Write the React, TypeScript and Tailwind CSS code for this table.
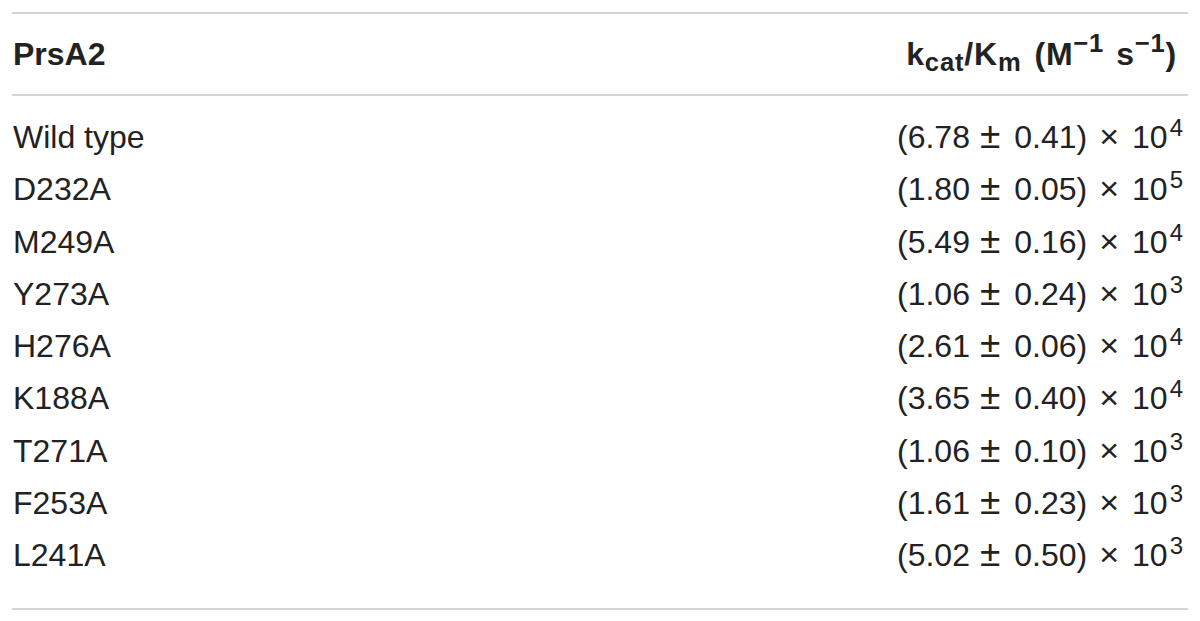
const rows: [string, string, string, string][] = [
  ["Wild type", "6.78", "0.41", "4"],
  ["D232A", "1.80", "0.05", "5"],
  ["M249A", "5.49", "0.16", "4"],
  ["Y273A", "1.06", "0.24", "3"],
  ["H276A", "2.61", "0.06", "4"],
  ["K188A", "3.65", "0.40", "4"],
  ["T271A", "1.06", "0.10", "3"],
  ["F253A", "1.61", "0.23", "3"],
  ["L241A", "5.02", "0.50", "3"],
];

export default function App() {
  return (
    <div className="w-[1200px] h-[621px] bg-white pt-[12px] px-3 text-[#222] font-['Liberation_Sans',Arial,sans-serif]">
      <div className="border-t-2 border-[#d4d4d4]">
        <div className="flex items-center justify-between h-[80px] px-[1px] pr-[11px] text-[32px] font-bold">
          <span>PrsA2</span>
          <span className="whitespace-nowrap tracking-[0.8px]">
            k<sub className="text-[0.8em]">cat</sub>/K<sub className="text-[0.8em]">m</sub>
            <span className="inline-block w-[13px]" />
            (M<sup className="text-[0.8em]">−1</sup>
            <span className="inline-block w-[12px]" />
            s<sup className="text-[0.8em]">−1</sup>)
          </span>
        </div>
        <div className="border-t-2 border-[#d4d4d4] pt-[15px] pb-[27px]">
          {rows.map(([name, v, e, p]) => (
            <div key={name} className="flex items-center justify-between h-[52.25px] px-[1px] pr-[5px] text-[32px]">
              <span>{name}</span>
              <span className="whitespace-nowrap">
                ({v}
                <span className="ml-[10px] mr-[14px] text-[37px] leading-none">±</span>
                {e})
                <span className="ml-[12px] mr-[13px] text-[34px] leading-none">×</span>
                10<sup className="ml-[2px]">{p}</sup>
              </span>
            </div>
          ))}
        </div>
        <div className="border-t-2 border-[#d4d4d4]" />
      </div>
    </div>
  );
}
